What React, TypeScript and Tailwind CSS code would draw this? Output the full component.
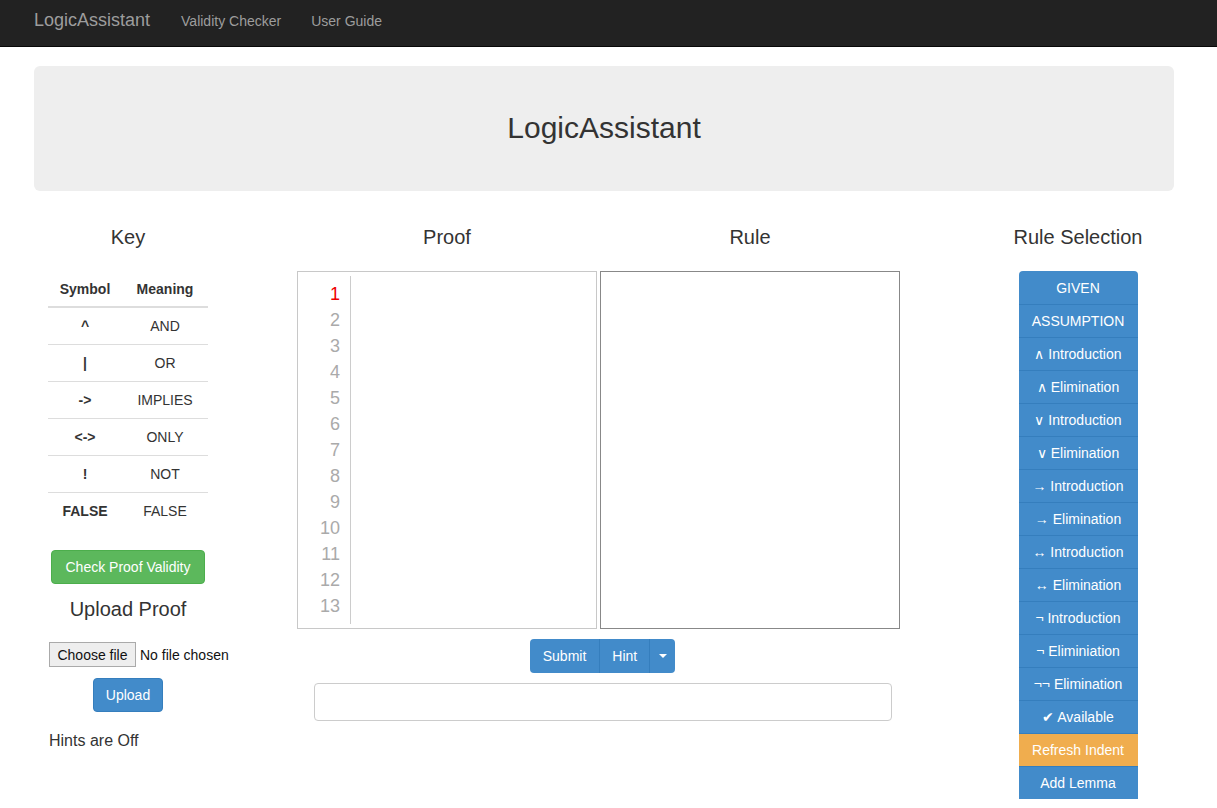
import React from "react";

const keyRows: [string, string][] = [
  ["^", "AND"],
  ["|", "OR"],
  ["->", "IMPLIES"],
  ["<->", "ONLY"],
  ["!", "NOT"],
  ["FALSE", "FALSE"],
];

const rules = [
  "GIVEN",
  "ASSUMPTION",
  "∧ Introduction",
  "∧ Elimination",
  "∨ Introduction",
  "∨ Elimination",
  "→ Introduction",
  "→ Elimination",
  "↔ Introduction",
  "↔ Elimination",
  "¬ Introduction",
  "¬ Eliminiation",
  "¬¬ Elimination",
  "✔ Available",
  "Refresh Indent",
  "Add Lemma",
];

const lines = Array.from({ length: 13 }, (_, i) => i + 1);

const App: React.FC = () => {
  return (
    <div className="min-h-screen bg-white text-[#333] font-['Liberation_Sans',Arial,sans-serif] text-sm">
      {/* navbar */}
      <nav className="h-[47px] bg-[#222] border-b border-[#080808]">
        <div className="w-[1170px] ml-[19px] px-[15px] flex items-center h-[42px]">
          <span className="text-[18px] text-[#9d9d9d]">LogicAssistant</span>
          <span className="ml-[31px] text-[#9d9d9d]">Validity Checker</span>
          <span className="ml-[30px] text-[#9d9d9d]">User Guide</span>
        </div>
      </nav>

      <div className="w-[1170px] ml-[19px] px-[15px]">
        <div className="mt-[19px] h-[125px] rounded-[6px] bg-[#eee] flex items-center justify-center">
          <h1 className="text-[30px] font-medium text-[#333]">LogicAssistant</h1>
        </div>

        <div className="flex mt-[35px]">
          {/* key column */}
          <div className="w-[188px] shrink-0 flex flex-col items-center">
            <h3 className="text-[20px] font-light leading-[22px]">Key</h3>
            <table className="mt-[23px] w-[160px] text-center">
              <thead>
                <tr className="h-[36px] border-b-2 border-[#ddd]">
                  <th className="w-[74px] font-bold">Symbol</th>
                  <th className="font-bold">Meaning</th>
                </tr>
              </thead>
              <tbody>
                {keyRows.map(([sym, meaning], i) => (
                  <tr
                    key={sym}
                    className={`h-[37px] ${i > 0 ? "border-t border-[#ddd]" : ""}`}
                  >
                    <td className="font-bold">{sym}</td>
                    <td>{meaning}</td>
                  </tr>
                ))}
              </tbody>
            </table>
            <button className="mt-[21px] h-[34px] px-[13px] rounded-[4px] bg-[#5cb85c] border border-[#4cae4c] text-white">
              Check Proof Validity
            </button>
            <h3 className="mt-[14px] text-[20px] font-light leading-[22px]">Upload Proof</h3>
            <div className="mt-[22px] self-start ml-[15px] flex items-center whitespace-nowrap w-[200px]">
              <span className="h-[25px] w-[87px] shrink-0 flex items-center justify-center border border-[#aaa] bg-[#eee] text-[#111] text-[14px]">
                Choose file
              </span>
              <span className="ml-[4px] text-[#111]">No file chosen</span>
            </div>
            <button className="mt-[11px] h-[34px] px-[12px] rounded-[4px] bg-[#428bca] border border-[#357ebd] text-white">
              Upload
            </button>
            <p className="mt-[18px] self-start ml-[15px] text-[16px]">Hints are Off</p>
          </div>

          {/* proof + rule */}
          <div className="ml-[75px] w-[603px] shrink-0 flex flex-col">
            <div className="flex">
              <h3 className="w-[300px] text-center text-[20px] font-light leading-[22px]">Proof</h3>
              <h3 className="ml-[3px] w-[300px] text-center text-[20px] font-light leading-[22px]">Rule</h3>
            </div>
            <div className="mt-[23px] flex gap-[3px]">
              <div className="w-[300px] h-[358px] border border-[#c8c8c8] flex py-[4px]">
                <div className="w-[53px] border-r border-[#ccc] pr-[10px] pt-[5px] flex flex-col items-end text-[18px] leading-[26px] text-[#aaa]">
                  {lines.map((n) => (
                    <span key={n} className={n === 1 ? "text-[#e00]" : ""}>
                      {n}
                    </span>
                  ))}
                </div>
              </div>
              <div className="w-[300px] h-[358px] border border-[#888]" />
            </div>
            <div className="mt-[10px] flex justify-center">
              <div className="ml-[8px] flex h-[34px] rounded-[4px] overflow-hidden bg-[#428bca] text-white">
                <span className="px-[13px] flex items-center">Submit</span>
                <span className="px-[12px] flex items-center border-l border-[#357ebd]">Hint</span>
                <span className="w-[26px] flex items-center justify-center border-l border-[#357ebd]">
                  <span className="w-0 h-0 border-x-4 border-x-transparent border-t-4 border-t-white" />
                </span>
              </div>
            </div>
            <div className="mt-[10px] ml-[17px] w-[578px] h-[38px] rounded-[4px] border border-[#ccc]" />
          </div>

          {/* rule selection */}
          <div className="ml-[96px] w-[164px] shrink-0 flex flex-col items-center">
            <h3 className="text-[20px] font-light leading-[22px]">Rule Selection</h3>
            <div className="mt-[23px] w-[119px] flex flex-col rounded-t-[4px] overflow-hidden">
              {rules.map((r, i) => (
                <div
                  key={r}
                  className={`h-[33px] flex items-center justify-center text-white ${
                    r === "Refresh Indent" ? "bg-[#f0ad4e]" : "bg-[#428bca]"
                  } ${i > 0 ? "border-t border-[#357ebd]" : ""}`}
                >
                  {r}
                </div>
              ))}
            </div>
          </div>
        </div>
      </div>
    </div>
  );
};

export default App;
